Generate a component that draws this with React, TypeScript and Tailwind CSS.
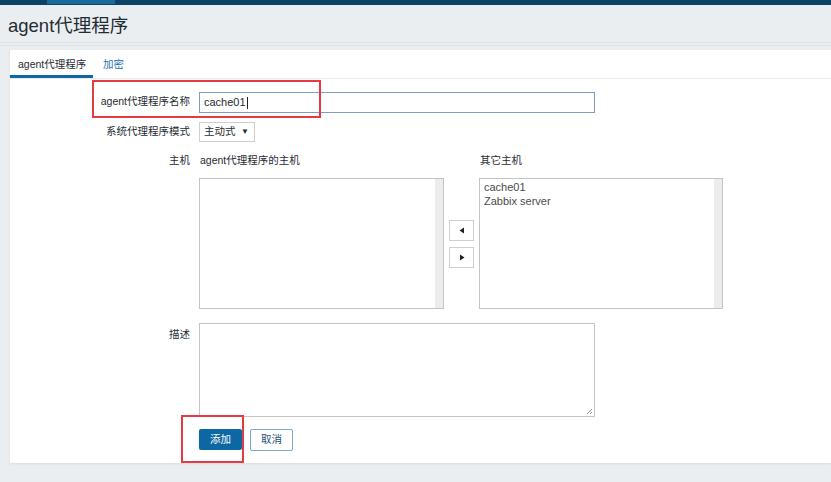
const font = "font-['Liberation_Sans','Noto_Sans_CJK_SC',sans-serif]";

function ListBox({ items }: { items: string[] }) {
  return (
    <div className="flex h-[131px] w-full border border-[#c4c4c4] bg-white">
      <div className="flex-1 px-[4px] pt-[1px] text-[11px] leading-[14px] text-[#4b4b4b]">
        {items.map((item) => (
          <div key={item}>{item}</div>
        ))}
      </div>
      <div className="w-[8px] bg-[#ececec]" />
    </div>
  );
}

function MoveButton({ dir }: { dir: "left" | "right" }) {
  return (
    <button
      type="button"
      className="flex h-[21px] w-[25px] items-center justify-center border border-[#cfcfcf] bg-white"
    >
      <svg width="6" height="7" viewBox="0 0 6 7">
        {dir === "left" ? (
          <path d="M5 0.5 L0.5 3.5 L5 6.5 Z" fill="#222" />
        ) : (
          <path d="M1 0.5 L5.5 3.5 L1 6.5 Z" fill="#222" />
        )}
      </svg>
    </button>
  );
}

export default function App() {
  return (
    <div className={`relative h-[482px] w-[831px] overflow-hidden bg-[#ebeef0] ${font}`}>
      {/* top bar */}
      <div className="h-[5px] bg-[#0b4266]">
        <div className="ml-[47px] h-[4px] w-[68px] bg-[#1a6a9b]" />
      </div>

      {/* page title */}
      <div className="flex h-[37px] items-center px-[8px] pt-[5px]">
        <h1 className="text-[18.5px] leading-none text-[#1f2c33]">agent代理程序</h1>
      </div>
      <div className="border-t border-[#dfe2e4]" />
      <div className="mt-[2px] border-t border-[#dfe2e4]" />

      {/* panel */}
      <div className="ml-[10px] mt-[4px] h-[413px] bg-white shadow-[0_1px_2px_rgba(0,0,0,0.08)]">
        {/* tabs */}
        <div className="flex h-[29px] border-b border-[#ebebeb]">
          <div className="flex w-[83px] items-center border-b-[3px] border-[#0e67a6] pl-[8px] pt-[5px] text-[10.5px] text-[#1f2c33]">
            agent代理程序
          </div>
          <div className="flex items-center pl-[10px] pt-[2px] text-[10.5px] text-[#1f6fae]">加密</div>
        </div>

        {/* form */}
        <div className="mt-[13px] grid grid-cols-[180px_1fr] gap-x-[9px] text-[10.5px] text-[#1f2c33]">
          <div className="flex h-[20px] items-center justify-end">agent代理程序名称</div>
          <div>
            <div className="flex h-[21px] w-[396px] items-center border border-[#7c9fc0] px-[4px] text-[11px]">
              cache01
              <span className="ml-[1px] inline-block h-[12px] w-px bg-[#222]" />
            </div>
          </div>

          <div className="mt-[9px] flex h-[20px] items-center justify-end">系统代理程序模式</div>
          <div className="mt-[9px]">
            <div className="flex h-[20px] w-[56px] items-center justify-between border border-[#cfcfcf] pl-[4px] pr-[5px] text-[10.5px]">
              <span>主动式</span>
              <span className="text-[8px]">▼</span>
            </div>
          </div>

          <div className="mt-[11px] flex h-[16px] items-center justify-end">主机</div>
          <div className="mt-[11px] flex items-start gap-[5px]">
            <div className="w-[245px]">
              <div className="mb-[9px] flex h-[16px] items-center pl-[1px]">agent代理程序的主机</div>
              <ListBox items={[]} />
            </div>
            <div className="flex h-[156px] flex-col justify-center gap-[6px] pt-[25px]">
              <MoveButton dir="left" />
              <MoveButton dir="right" />
            </div>
            <div className="w-[244px]">
              <div className="mb-[9px] flex h-[16px] items-center pl-[1px]">其它主机</div>
              <ListBox items={["cache01", "Zabbix server"]} />
            </div>
          </div>

          <div className="mt-[14px] flex justify-end pt-[4px]">描述</div>
          <div className="mt-[14px]">
            <div className="relative h-[94px] w-[396px] border border-[#c4c4c4]">
              <svg className="absolute bottom-[1px] right-[1px]" width="8" height="8" viewBox="0 0 8 8">
                <path d="M7 2 L2 7 M7 5 L5 7" stroke="#999" strokeWidth="1" />
              </svg>
            </div>
          </div>

          <div />
          <div className="mt-[12px] flex gap-[8px]">
            <button
              type="button"
              className="h-[21px] w-[43px] rounded-[2px] bg-[#0c67a3] text-[10.5px] text-white"
            >
              添加
            </button>
            <button
              type="button"
              className="h-[22px] w-[43px] rounded-[2px] border border-[#7ea9cf] bg-white text-[10.5px] text-[#1c4f78]"
            >
              取消
            </button>
          </div>
        </div>
      </div>

      {/* red annotation boxes */}
      <div className="pointer-events-none absolute left-[92px] top-[80px] h-[38px] w-[229px] border-[2px] border-[#e63a42]" />
      <div className="pointer-events-none absolute left-[181px] top-[415px] h-[48px] w-[63px] border-[2px] border-[#e63a42]" />
    </div>
  );
}
